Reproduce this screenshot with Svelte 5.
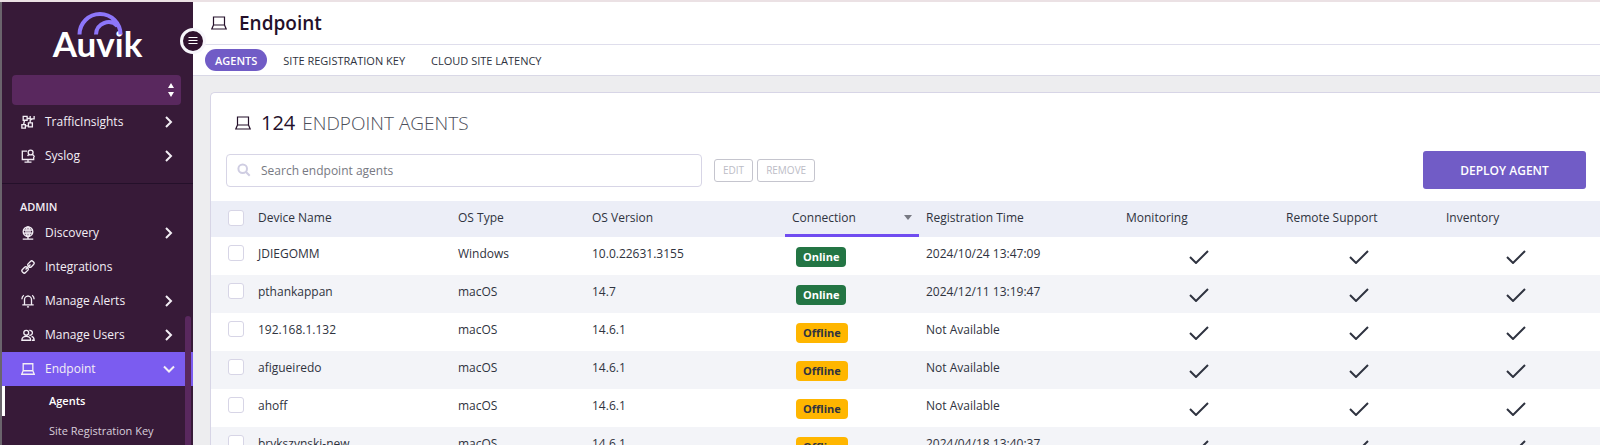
<script lang="ts">
  interface NavItem {
    label: string;
    icon: string;
    expandable: boolean;
    open?: boolean;
  }

  interface Agent {
    name: string;
    osType: string;
    osVersion: string;
    online: boolean;
    registered: string;
  }

  const monitorNav: NavItem[] = [
    { label: 'TrafficInsights', icon: 'traffic', expandable: true },
    { label: 'Syslog', icon: 'syslog', expandable: true },
  ];

  const adminNav: NavItem[] = [
    { label: 'Discovery', icon: 'globe', expandable: true },
    { label: 'Integrations', icon: 'link', expandable: false },
    { label: 'Manage Alerts', icon: 'bell', expandable: true },
    { label: 'Manage Users', icon: 'users', expandable: true },
    { label: 'Endpoint', icon: 'laptop', expandable: true, open: true },
  ];

  const subNav = ['Agents', 'Site Registration Key'];
  const tabs = ['Agents', 'Site Registration Key', 'Cloud Site Latency'];
  const features = ['Monitoring', 'Remote Support', 'Inventory'];

  const agents: Agent[] = [
    { name: 'JDIEGOMM', osType: 'Windows', osVersion: '10.0.22631.3155', online: true, registered: '2024/10/24 13:47:09' },
    { name: 'pthankappan', osType: 'macOS', osVersion: '14.7', online: true, registered: '2024/12/11 13:19:47' },
    { name: '192.168.1.132', osType: 'macOS', osVersion: '14.6.1', online: false, registered: 'Not Available' },
    { name: 'afigueiredo', osType: 'macOS', osVersion: '14.6.1', online: false, registered: 'Not Available' },
    { name: 'ahoff', osType: 'macOS', osVersion: '14.6.1', online: false, registered: 'Not Available' },
    { name: 'brykszynski-new', osType: 'macOS', osVersion: '14.6.1', online: false, registered: '2024/04/18 13:40:37' },
  ];

  let activeTab = $state('Agents');
  let search = $state('');
  let selected: string[] = $state([]);

  let allSelected = $derived(selected.length === agents.length);

  function toggleAll() {
    selected = allSelected ? [] : agents.map(a => a.name);
  }
</script>

<svelte:head><title>Endpoint Agents</title></svelte:head>

{#snippet icon(name: string)}
  <svg class="icon" viewBox="0 0 16 16" aria-hidden="true">
    {#if name === 'traffic'}
      <path d="M2.500 1.500h4.500v4.500H2.500zM1 11h4v4H1zM8.500 9h4.500v4.500H8.500z" />
      <path d="M7 4h3.500M4 6L3 11M5 12.500h3.500M10.500 9V6l2.500-1.500M10.500 1v3.500H15V1" />
    {:else if name === 'syslog'}
      <path d="M7 2.500H1.500v9.500h13V9M8 12v3M4 15h8" />
      <circle cx="11" cy="4" r="2.800" />
      <path d="M13 6l2.500 3M9 6L7.500 8" />
    {:else if name === 'globe'}
      <circle cx="8" cy="6.500" r="5.500" />
      <ellipse cx="8" cy="6.500" rx="2.300" ry="5.500" />
      <path d="M3 4.800h10M3 8.200h10M8 1v14M2 15h12" />
    {:else if name === 'link'}
      <g transform="rotate(-45 8 8)">
        <rect x="-0.500" y="5.500" width="7.500" height="5" rx="2" />
        <rect x="9" y="5.500" width="7.500" height="5" rx="2" />
        <path d="M4 8h8" />
      </g>
    {:else if name === 'bell'}
      <path d="M1.500 12.500h13M4 12.500V6.500a4 4 0 0 1 8 0v6M1 6c0-2 .8-3.500 2.200-4.500M15 6c0-2-.8-3.500-2.200-4.500M6.800 14.800h2.400M8 2.500V1.500" />
    {:else if name === 'users'}
      <circle cx="6" cy="5.500" r="2.800" />
      <path d="M1 14c0-3 2-4.500 5-4.500s5 1.500 5 4.500zM9.500 2.800a2.800 2.800 0 1 1 0 5.400M12 9.700c2 .5 3 1.800 3 4.300h-2.500" />
    {:else}
      <path d="M2.500 2h11v8h-11zM2.500 10L.8 14h14.400l-1.700-4" />
    {/if}
  </svg>
{/snippet}

{#snippet navList(items: NavItem[])}
  <ul class="nav-list">
    {#each items as item}
      <li>
        <a href="#{item.icon}" class="nav-item" class:open={item.open}>
          {@render icon(item.icon)}
          <span class="nav-label">{item.label}</span>
          {#if item.expandable}
            <svg class="chevron" viewBox="0 0 12 12" aria-hidden="true">
              <path d={item.open ? 'M1 3.500l5 5 5-5' : 'M3 1l5 5-5 5'} />
            </svg>
          {/if}
        </a>
      </li>
    {/each}
  </ul>
{/snippet}

<div class="app">
  <aside class="sidebar">
    <a href="#home" class="logo">
      <span>Auvik</span>
      <svg class="logo-arcs" viewBox="0 0 46 24" aria-hidden="true">
        <path d="M2.500 23.500a20.500 20.500 0 0 1 41 0M19 23.500A12.500 12.500 0 0 1 40.500 15" />
      </svg>
    </a>

    <button class="menu-toggle" aria-label="Collapse menu">
      <svg viewBox="0 0 12 12" aria-hidden="true"><path d="M1.500 2.500h9M1.500 5.500h9M1.500 8.500h9" /></svg>
    </button>

    <button class="site-picker" aria-label="Select site">
      <svg viewBox="0 0 8 16" aria-hidden="true"><path d="M4 1l3 5H1zM4 15l3-5H1z" /></svg>
    </button>

    <nav>
      {@render navList(monitorNav)}
      <div class="nav-section">ADMIN</div>
      {@render navList(adminNav)}
      <ul class="nav-list">
        {#each subNav as label, i}
          <li><a href="#sub-{i}" class="sub-item" class:current={i === 0}>{label}</a></li>
        {/each}
      </ul>
    </nav>
    <div class="scroll-thumb"></div>
  </aside>

  <main class="main">
    <header class="page-header">
      {@render icon('laptop')}
      <h1>Endpoint</h1>
    </header>

    <div class="tabs">
      {#each tabs as tab}
        <button class="tab" class:active={tab === activeTab} onclick={() => (activeTab = tab)}>{tab.toUpperCase()}</button>
      {/each}
    </div>

    <section class="card">
      <div class="card-title">
        {@render icon('laptop')}
        <h2><span class="count">124</span> ENDPOINT AGENTS</h2>
      </div>

      <div class="toolbar">
        <label class="search">
          <svg viewBox="0 0 14 14" aria-hidden="true">
            <circle cx="5.700" cy="5.700" r="4.300" /><path d="M9 9l3.700 3.700" />
          </svg>
          <input type="text" placeholder="Search endpoint agents" aria-label="Search endpoint agents" bind:value={search} />
        </label>
        <div class="actions">
          <button class="btn-small" disabled>EDIT</button>
          <button class="btn-small" disabled>REMOVE</button>
        </div>
        <button class="btn-deploy">DEPLOY AGENT</button>
      </div>

      <table>
        <colgroup>
          <col class="col-check" /><col class="col-wide" /><col class="col-narrow" /><col class="col-wide" />
          <col class="col-narrow" /><col class="col-wide" /><col class="col-feature" /><col class="col-feature" /><col />
        </colgroup>
        <thead>
          <tr>
            <th class="check-cell"><input type="checkbox" aria-label="Select all agents" checked={allSelected} onchange={toggleAll} /></th>
            <th>Device Name</th>
            <th>OS Type</th>
            <th>OS Version</th>
            <th class="sorted" aria-sort="descending">
              <div class="sort-label">Connection <span class="sort-arrow"></span></div>
            </th>
            <th>Registration Time</th>
            {#each features as feature}
              <th>{feature}</th>
            {/each}
          </tr>
        </thead>
        <tbody>
          {#each agents as agent}
            <tr>
              <td class="check-cell"><input type="checkbox" aria-label="Select {agent.name}" value={agent.name} bind:group={selected} /></td>
              <td>{agent.name}</td>
              <td>{agent.osType}</td>
              <td>{agent.osVersion}</td>
              <td class="status-cell">
                <span class="badge" class:online={agent.online}>{agent.online ? 'Online' : 'Offline'}</span>
              </td>
              <td>{agent.registered}</td>
              {#each features as feature}
                <td class="feature-cell">
                  <svg viewBox="0 0 20 14" role="img" aria-label="{feature} enabled"><path d="M1 7l6 6L19 1" /></svg>
                </td>
              {/each}
            </tr>
          {/each}
        </tbody>
      </table>
    </section>
  </main>
</div>

<style>
  :global(body) { margin: 0; overflow: hidden; }

  .app {
    box-sizing: border-box;
    display: flex;
    height: 100vh;
    overflow: hidden;
    border-top: 2px solid #ebe1e4;
    background: #ededef;
    color: #2f3340;
    font-family: 'Open Sans', 'Noto Sans', sans-serif;
    font-size: 12px;
    line-height: 18px;
  }

  button, input { font-family: inherit; box-sizing: border-box; }
  button { cursor: pointer; padding: 0; border: 0; }
  a { color: inherit; text-decoration: none; }
  h1, h2 { margin: 0; }

  .icon {
    width: 16px;
    height: 16px;
    flex: none;
    fill: none;
    stroke: currentColor;
    stroke-width: 1.2;
  }

  /* Sidebar */
  .sidebar {
    position: relative;
    box-sizing: border-box;
    flex: none;
    width: 193px;
    border-left: 2px solid #6a646c;
    background: #371a38;
    color: #f3eef5;
  }

  .logo {
    position: relative;
    display: block;
    padding-top: 19px;
    height: 54px;
    text-align: center;
    font-family: Lato, 'Open Sans', sans-serif;
    font-size: 35px;
    font-weight: 700;
    line-height: 44px;
    color: #fff;
  }
  .logo-arcs {
    position: absolute;
    left: 75px;
    top: 9px;
    width: 46px;
    height: 24px;
    fill: none;
    stroke: #8d76fa;
    stroke-width: 4;
  }

  .menu-toggle {
    position: absolute;
    z-index: 1;
    right: -13px;
    top: 26px;
    width: 26px;
    height: 26px;
    display: grid;
    place-items: center;
    border: 3px solid #f7f6fb;
    border-radius: 50%;
    background: #30132f;
  }
  .menu-toggle svg { width: 12px; height: 12px; stroke: #fff; stroke-width: 1; }

  .site-picker {
    display: flex;
    align-items: center;
    justify-content: flex-end;
    width: calc(100% - 22px);
    height: 30px;
    margin: 0 10px;
    padding-right: 6px;
    border-radius: 4px;
    background: #59285e;
  }
  .site-picker svg { width: 8px; height: 16px; fill: #fff; }

  .nav-list { list-style: none; margin: 0; padding: 0; }
  .nav-item {
    display: flex;
    align-items: center;
    gap: 10px;
    height: 34px;
    padding: 0 18px 0 19px;
  }
  .nav-item .icon { width: 14px; height: 14px; stroke-width: 1.5; }
  .nav-item.open { background: #7b5cf0; }
  .nav-label { flex: 1; }
  .chevron { width: 12px; height: 12px; fill: none; stroke: #f3eef5; stroke-width: 2; }

  .nav-section {
    margin-top: 10px;
    padding: 14px 18px 0;
    border-top: 1px solid #24102a;
    font-size: 11px;
    font-weight: 600;
  }

  .sub-item {
    display: flex;
    align-items: center;
    height: 30px;
    padding-left: 44px;
    border-left: 3px solid transparent;
    font-size: 11px;
    color: #d9cfdc;
  }
  .sub-item.current { border-left-color: #fff; color: #fff; font-weight: 600; }

  .scroll-thumb {
    position: absolute;
    right: 2px;
    top: 314px;
    bottom: 0;
    width: 6px;
    border-radius: 3px 3px 0 0;
    background: #59285e;
  }

  /* Page header */
  .main { flex: 1; min-width: 0; }

  .page-header {
    display: flex;
    align-items: center;
    gap: 12px;
    height: 42px;
    padding-left: 18px;
    border-bottom: 1px solid #dfdeec;
    background: #fff;
    color: #24102a;
  }
  h1 { font-size: 19px; line-height: 26px; font-weight: 600; }

  .tabs {
    display: flex;
    align-items: center;
    gap: 6px;
    height: 30px;
    padding-left: 12px;
    border-bottom: 1px solid #d9d8e6;
    background: #fff;
  }
  .tab {
    height: 22px;
    padding: 0 10px;
    border-radius: 11px;
    background: none;
    color: #2f3340;
    font-size: 11px;
  }
  .tab.active { background: #715cc6; color: #fff; font-weight: 600; }

  /* Agents card */
  .card {
    margin: 16px 0 0 17px;
    border: 1px solid #d7d5e6;
    border-right: 0;
    border-radius: 5px 0 0 0;
    background: #fff;
  }

  .card-title {
    display: flex;
    align-items: center;
    gap: 10px;
    padding: 17px 24px 0;
    color: #24102a;
  }
  h2 { font-size: 19px; line-height: 26px; font-weight: 300; color: #4b4e59; }
  .count { margin-right: 2px; font-size: 20px; font-weight: 400; color: #24102a; }

  .toolbar {
    display: flex;
    align-items: center;
    gap: 12px;
    padding: 15px 14px 12px 15px;
  }

  .search {
    box-sizing: border-box;
    display: flex;
    align-items: center;
    flex: 0 1 476px;
    gap: 10px;
    height: 33px;
    padding: 0 10px;
    border: 1px solid #d7d5e6;
    border-radius: 4px;
  }
  .search svg { width: 14px; height: 14px; fill: none; stroke: #cfcde2; stroke-width: 2; }
  .search input {
    flex: 1;
    min-width: 0;
    padding: 0;
    border: 0;
    outline: none;
    background: none;
    color: #2f3340;
    font-size: 12px;
  }
  .search input::placeholder { color: #777982; }

  .actions { display: flex; gap: 4px; }
  .btn-small {
    height: 23px;
    padding: 0 8px;
    border: 1px solid #c5c5ce;
    border-radius: 3px;
    background: #fff;
    color: #bcbcc6;
    font-size: 10px;
  }

  .btn-deploy {
    width: 163px;
    height: 38px;
    margin-left: auto;
    border-radius: 3px;
    background: #715cc6;
    color: #fff;
    font-size: 12px;
    font-weight: 600;
  }

  /* Table */
  table { width: 100%; table-layout: fixed; border-collapse: separate; border-spacing: 0; }
  .col-check { width: 40px; }
  .col-wide { width: 200px; }
  .col-narrow { width: 134px; }
  .col-feature { width: 160px; }

  th, td { box-sizing: border-box; padding: 0 7px; text-align: left; font-weight: 400; white-space: nowrap; }
  th { height: 36px; border-bottom: 3px solid #eceef7; background: #eceef7; }
  td { height: 38px; padding-bottom: 4px; }
  tbody tr:nth-child(even) { background: #f3f4f8; }

  th.sorted { border-bottom-color: #704cf0; }
  .sort-label { display: flex; align-items: center; justify-content: space-between; }
  .sort-arrow { border: 4px solid transparent; border-top: 5px solid #777982; border-bottom: 0; }

  .check-cell { padding-left: 17px; padding-right: 0; }
  td.check-cell { padding-bottom: 6px; }
  .check-cell input {
    appearance: none;
    display: block;
    width: 16px;
    height: 16px;
    margin: 0;
    border: 1px solid #d7d5e6;
    border-radius: 3px;
    background: #fff;
  }
  .check-cell input:checked { background: #715cc6; border-color: #715cc6; }

  td.status-cell { padding: 2px 11px 0; }
  .badge {
    display: block;
    width: fit-content;
    padding: 0 7px;
    border-radius: 4px;
    background: #ffb600;
    color: #2f3340;
    font-size: 11px;
    font-weight: 700;
    line-height: 20px;
  }
  .badge.online { background: #237544; color: #fff; }

  td.feature-cell { padding: 2px 0 0; }
  td.feature-cell:last-child { padding-right: 8px; }
  .feature-cell svg {
    display: block;
    width: 20px;
    height: 14px;
    margin: 0 auto;
    fill: none;
    stroke: #2f3340;
    stroke-width: 2;
  }
</style>
